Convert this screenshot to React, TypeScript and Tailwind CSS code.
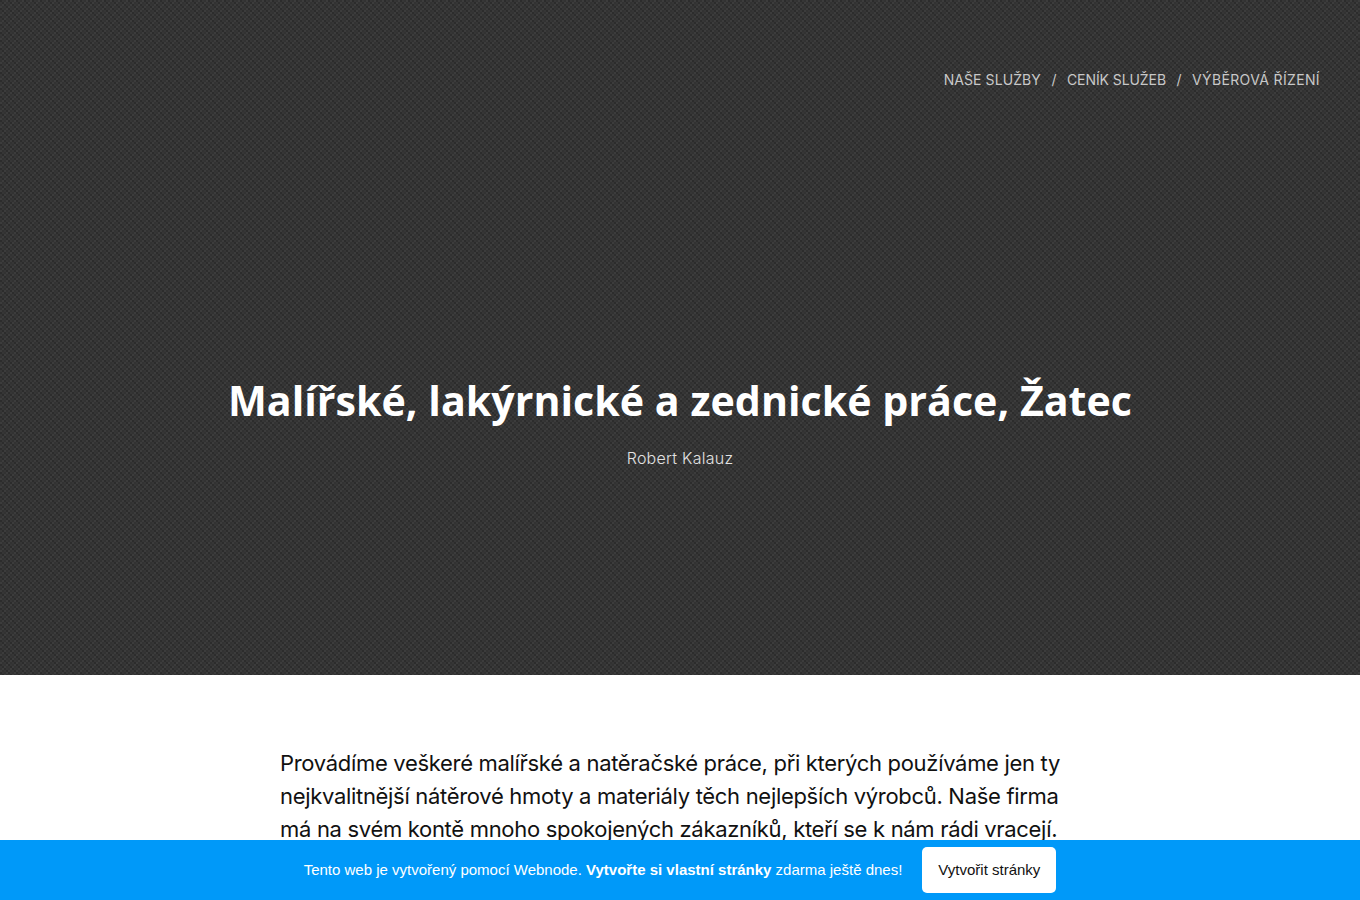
const NAV_ITEMS = [
  { label: 'NAŠE SLUŽBY', className: 'tracking-[0.08px]' },
  { label: 'CENÍK SLUŽEB', className: 'tracking-[-0.08px]' },
  { label: 'VÝBĚROVÁ ŘÍZENÍ', className: 'tracking-[0.36px]' },
];

export default function App() {
  return (
    <div className="relative h-screen overflow-hidden bg-white font-['Inter','Liberation_Sans',sans-serif]">
      <header className="flex h-[675px] flex-col bg-[#333333] bg-[image:repeating-conic-gradient(#ffffff07_0_25%,#0000_0_50%),repeating-conic-gradient(#363636_0_25%,#2c2c2c_0_50%)] bg-[length:8px_8px,4px_4px]">
        <nav className="flex justify-end pr-10 pt-[69px] text-[14px] leading-[22px] text-[#c8c8c8]">
          {NAV_ITEMS.map((item, i) => (
            <span key={item.label} className="flex">
              {i > 0 && <span className="px-[10.5px]">/</span>}
              <span className={item.className}>{item.label}</span>
            </span>
          ))}
        </nav>
        <div className="mt-[278px] text-center">
          <h1 className="font-['Open_Sans',sans-serif] text-[41.2px] font-bold leading-[62px] text-white">
            Malířské, lakýrnické a zednické práce, Žatec
          </h1>
          <p className="mt-[15px] text-[16px] font-light leading-[24px] tracking-[0.25px] text-[#e2e2e2]">Robert Kalauz</p>
        </div>
      </header>

      <main className="mx-auto w-[800px] pt-[72px] text-[22px] leading-[33px] tracking-[-0.31px] text-[#111111]">
        <p>
          Provádíme veškeré malířské a natěračské práce, při kterých používáme jen ty nejkvalitnější nátěrové hmoty a
          materiály těch nejlepších výrobců. Naše firma má na svém kontě mnoho spokojených zákazníků, kteří se k nám rádi
          vracejí.
        </p>
      </main>

      <div className="absolute bottom-0 left-0 right-0 flex h-[60px] items-center justify-center gap-5 bg-[#0099f9] font-['Liberation_Sans',Arial,sans-serif] text-[15px] text-white">
        <span>
          Tento web je vytvořený pomocí Webnode. <strong>Vytvořte si vlastní stránky</strong> zdarma ještě dnes!
        </span>
        <a className="flex h-[46px] items-center rounded-[5px] bg-white px-4 text-[#111111]">Vytvořit stránky</a>
      </div>
    </div>
  );
}
